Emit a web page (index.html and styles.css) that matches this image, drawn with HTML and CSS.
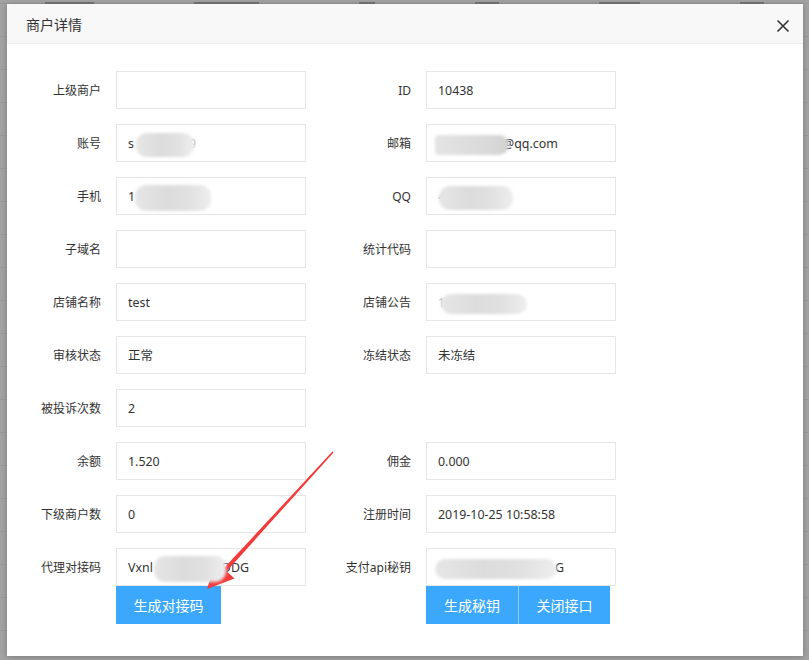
FILE: index.html
```html
<!DOCTYPE html>
<html lang="zh-CN">
<head>
<meta charset="utf-8">
<title>商户详情</title>
<link rel="stylesheet" href="styles.css">
</head>
<body>
<div class="backdrop">
  <div class="bg-head"><i class="w60"></i><i class="w80"></i><i class="w20"></i><i class="w30"></i><i class="w50"></i><i class="w30"></i></div>
</div>

<div class="dialog">
  <div class="dlg-head">
    <span class="dlg-title">商户详情</span>
    <svg class="dlg-close" width="14" height="14" viewBox="0 0 14 14"><path d="M1.5 1.5 L12.5 12.5 M12.5 1.5 L1.5 12.5" stroke="#333" stroke-width="1.6" fill="none"/></svg>
  </div>
  <div class="dlg-body">
    <div class="form">
      <div class="field"><label>上级商户</label><div class="input"></div></div>
      <div class="field"><label>ID</label><div class="input">10438</div></div>

      <div class="field"><label>账号</label><div class="input">s<span class="blur b-acct"></span><span class="faint">99</span></div></div>
      <div class="field"><label>邮箱</label><div class="input"><span class="blur b-mail"></span>@qq.com</div></div>

      <div class="field"><label>手机</label><div class="input">1<span class="blur b-phone"></span></div></div>
      <div class="field"><label>QQ</label><div class="input"><span class="faint">4</span><span class="blur b-qq"></span></div></div>

      <div class="field"><label>子域名</label><div class="input"></div></div>
      <div class="field"><label>统计代码</label><div class="input"></div></div>

      <div class="field"><label>店铺名称</label><div class="input">test</div></div>
      <div class="field"><label>店铺公告</label><div class="input"><span class="faint">1</span><span class="blur b-notice"></span></div></div>

      <div class="field"><label>审核状态</label><div class="input">正常</div></div>
      <div class="field"><label>冻结状态</label><div class="input">未冻结</div></div>

      <div class="field"><label>被投诉次数</label><div class="input">2</div></div>
      <div class="field empty"></div>

      <div class="field"><label>余额</label><div class="input">1.520</div></div>
      <div class="field"><label>佣金</label><div class="input">0.000</div></div>

      <div class="field"><label>下级商户数</label><div class="input">0</div></div>
      <div class="field"><label>注册时间</label><div class="input">2019-10-25 10:58:58</div></div>

      <div class="field last">
        <label>代理对接码</label>
        <div class="stack">
          <div class="input">Vxnl<span class="blur b-code"></span>DDG</div>
          <div class="btns"><button class="btn btn-wide">生成对接码</button></div>
        </div>
      </div>
      <div class="field last">
        <label>支付api秘钥</label>
        <div class="stack">
          <div class="input"><span class="blur b-key"></span>G</div>
          <div class="btns"><button class="btn">生成秘钥</button><button class="btn">关闭接口</button></div>
        </div>
      </div>
    </div>
  </div>
</div>

<svg class="arrow" width="809" height="660" viewBox="0 0 809 660">
  <polygon points="333.6,452.4 332.4,451.6 223.3,568.8 226.7,571.2" fill="#f23a3a"/>
  <polygon points="207,589 216,561.5 234.5,578.5" fill="#f23a3a"/>
</svg>
</body>
</html>
```

FILE: styles.css
```css
* { box-sizing: border-box; }
html, body { margin: 0; padding: 0; }
body {
  width: 809px;
  height: 660px;
  overflow: hidden;
  position: relative;
  background: #a3a3a3;
  font-family: "Noto Sans", "Noto Sans CJK SC", sans-serif;
  color: #333;
}

.backdrop {
  position: absolute;
  inset: 0;
  background:
    repeating-linear-gradient(to bottom, transparent 0, transparent 32px, #999 32px, #999 33px);
  background-position: 0 70px;
}
.bg-head {
  display: flex;
  gap: 100px;
  padding: 0 45px;
  height: 4px;
  align-items: flex-end;
}
.bg-head i {
  display: block;
  height: 2px;
  background: #777;
}
.w20 { width: 20px; }
.w30 { width: 30px; }
.w50 { width: 50px; }
.w60 { width: 60px; }
.w80 { width: 80px; }

.dialog {
  position: absolute;
  left: 7px;
  top: 4px;
  width: 796px;
  height: 652px;
  background: #fff;
  box-shadow: 0 1px 6px rgba(0,0,0,0.25);
}
.dlg-head {
  height: 40px;
  background: #f8f8f8;
  border-bottom: 1px solid #eee;
  display: flex;
  align-items: center;
  justify-content: space-between;
  padding: 0 13px 0 19px;
}
.dlg-title {
  font-size: 14px;
  color: #333;
}
.dlg-close { display: block; margin-top: 4px; }

.dlg-body {
  padding-top: 27px;
}
.form {
  display: grid;
  grid-template-columns: 299px 299px;
  column-gap: 11px;
  row-gap: 15px;
}
.field {
  display: flex;
  align-items: flex-start;
}
.field label {
  width: 109px;
  height: 38px;
  flex: none;
  padding-right: 15px;
  text-align: right;
  font-size: 12px;
  line-height: 40px;
  color: #333;
}
.input {
  width: 190px;
  height: 38px;
  border: 1px solid #e6e6e6;
  padding-left: 11px;
  font-size: 12.4px;
  line-height: 37px;
  color: #333;
  white-space: nowrap;
  overflow: hidden;
}
.stack { display: flex; flex-direction: column; }
.btns { display: flex; }
.btn {
  height: 38px;
  width: 92px;
  border: none;
  background: #3ba7fd;
  color: #fff;
  font-family: inherit;
  font-size: 14px;
  padding: 0;
  margin: 0;
}
.btn + .btn { border-left: 1px solid #8ecbfd; width: 92px; }
.btn-wide { width: 105px; }

.faint { color: #b9b9b9; }

.blur {
  display: inline-block;
  vertical-align: middle;
  height: 22px;
  border-radius: 11px;
  background: linear-gradient(to right, #e6e6e6 0%, #dcdcdc 40%, #e0e0e0 70%, #eeeeee 100%);
  filter: blur(1.5px);
  position: relative;
  z-index: 1;
}
.b-acct { width: 58px; margin: 0 -12px 0 2px; height: 24px; }
.b-mail { width: 74px; margin-left: -3px; margin-right: -6px; height: 20px; background: linear-gradient(to right, #e4e4e4, #d9d9d9 70%, #d2d2d2); border-radius: 4px 10px 10px 4px; }
.b-phone { width: 76px; height: 26px; margin-left: 0; }
.b-qq { width: 74px; height: 24px; margin-left: -6px; }
.b-notice { width: 86px; height: 20px; margin-left: -4px; }
.b-code { width: 72px; height: 26px; margin: 0 -4px 0 1px; }
.b-key { width: 122px; height: 20px; margin: 0 -2px 0 -3px; }

.arrow {
  position: absolute;
  left: 0;
  top: 0;
  pointer-events: none;
}
```
